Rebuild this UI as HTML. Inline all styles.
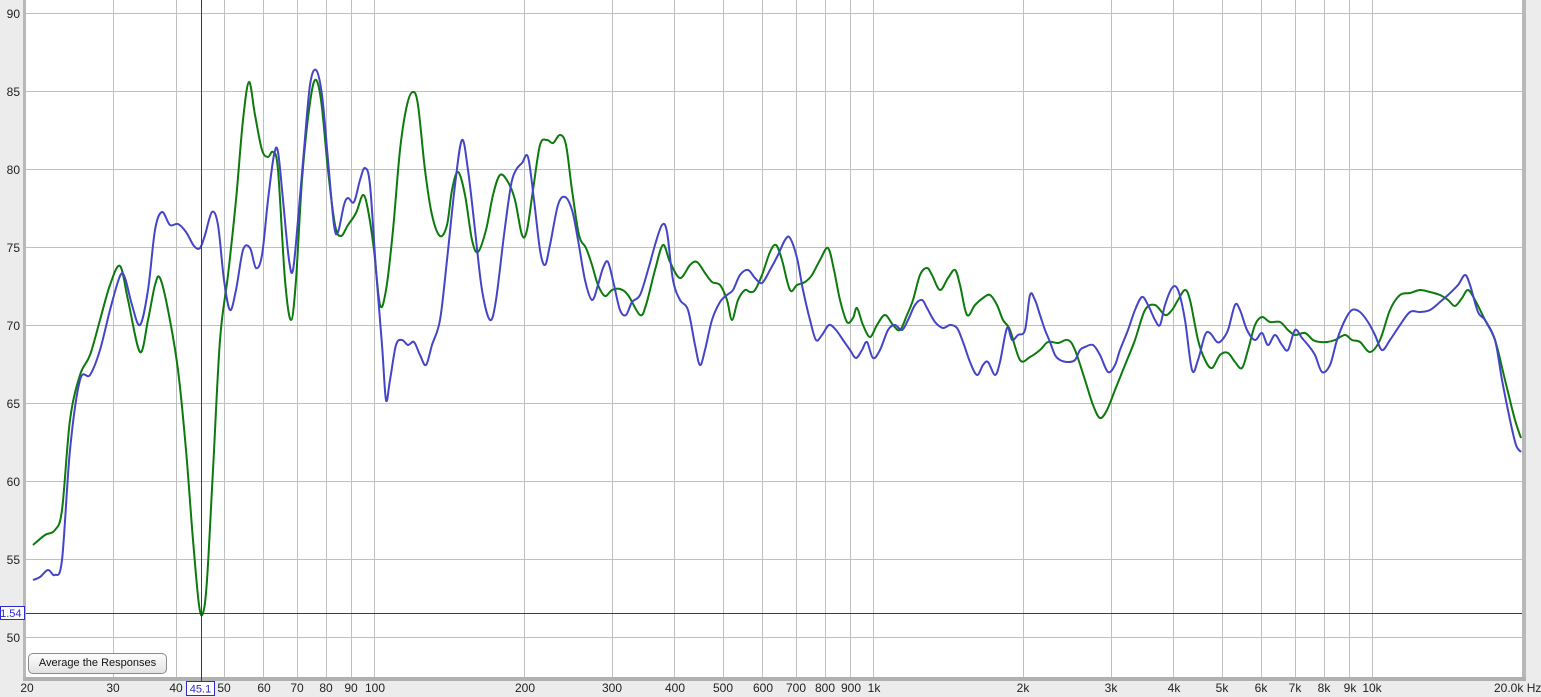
<!DOCTYPE html>
<html><head><meta charset="utf-8"><style>
html,body{margin:0;padding:0;background:#ececec;width:1541px;height:697px;overflow:hidden;font-family:"Liberation Sans",sans-serif}
svg{display:block}
.btn{position:absolute;left:28px;top:653px;width:139px;height:21px;border:1px solid #8a8a8a;border-radius:5px;background:linear-gradient(#fdfdfd,#e2e2e2);box-sizing:border-box;font-size:11px;line-height:19px;text-align:center;color:#111}
</style></head><body>
<svg width="1541" height="697" xmlns="http://www.w3.org/2000/svg" font-family="Liberation Sans, sans-serif" font-size="12" fill="#222">
<rect x="0" y="0" width="1541" height="697" fill="#ececec"/>
<rect x="23" y="0" width="4" height="681" fill="#b8b8b8"/>
<rect x="1522" y="0" width="4" height="681" fill="#b8b8b8"/>
<rect x="23" y="677" width="1503" height="4" fill="#b0b0b0"/>
<rect x="26" y="0" width="1496" height="677" fill="#fff"/>
<g stroke="#c0c0c0" stroke-width="1">
<line x1="26" x2="1522" y1="13.5" y2="13.5"/><line x1="26" x2="1522" y1="91.5" y2="91.5"/><line x1="26" x2="1522" y1="169.5" y2="169.5"/><line x1="26" x2="1522" y1="247.5" y2="247.5"/><line x1="26" x2="1522" y1="325.5" y2="325.5"/><line x1="26" x2="1522" y1="403.5" y2="403.5"/><line x1="26" x2="1522" y1="481.5" y2="481.5"/><line x1="26" x2="1522" y1="559.5" y2="559.5"/><line x1="26" x2="1522" y1="637.5" y2="637.5"/>
<line x1="113.5" x2="113.5" y1="0" y2="677"/><line x1="176.5" x2="176.5" y1="0" y2="677"/><line x1="224.5" x2="224.5" y1="0" y2="677"/><line x1="263.5" x2="263.5" y1="0" y2="677"/><line x1="297.5" x2="297.5" y1="0" y2="677"/><line x1="326.5" x2="326.5" y1="0" y2="677"/><line x1="351.5" x2="351.5" y1="0" y2="677"/><line x1="374.5" x2="374.5" y1="0" y2="677"/><line x1="524.5" x2="524.5" y1="0" y2="677"/><line x1="612.5" x2="612.5" y1="0" y2="677"/><line x1="674.5" x2="674.5" y1="0" y2="677"/><line x1="723.5" x2="723.5" y1="0" y2="677"/><line x1="762.5" x2="762.5" y1="0" y2="677"/><line x1="796.5" x2="796.5" y1="0" y2="677"/><line x1="825.5" x2="825.5" y1="0" y2="677"/><line x1="850.5" x2="850.5" y1="0" y2="677"/><line x1="873.5" x2="873.5" y1="0" y2="677"/><line x1="1023.5" x2="1023.5" y1="0" y2="677"/><line x1="1111.5" x2="1111.5" y1="0" y2="677"/><line x1="1173.5" x2="1173.5" y1="0" y2="677"/><line x1="1222.5" x2="1222.5" y1="0" y2="677"/><line x1="1261.5" x2="1261.5" y1="0" y2="677"/><line x1="1295.5" x2="1295.5" y1="0" y2="677"/><line x1="1324.5" x2="1324.5" y1="0" y2="677"/><line x1="1349.5" x2="1349.5" y1="0" y2="677"/><line x1="1372.5" x2="1372.5" y1="0" y2="677"/>
</g>
<g text-anchor="end">
<text x="20" y="18">90</text><text x="20" y="96">85</text><text x="20" y="174">80</text><text x="20" y="252">75</text><text x="20" y="330">70</text><text x="20" y="408">65</text><text x="20" y="486">60</text><text x="20" y="564">55</text><text x="20" y="642">50</text>
</g>
<g text-anchor="middle">
<text x="27" y="692">20</text><text x="113" y="692">30</text><text x="176" y="692">40</text><text x="224" y="692">50</text><text x="264" y="692">60</text><text x="297" y="692">70</text><text x="326" y="692">80</text><text x="351" y="692">90</text><text x="375" y="692">100</text><text x="525" y="692">200</text><text x="612" y="692">300</text><text x="675" y="692">400</text><text x="723" y="692">500</text><text x="763" y="692">600</text><text x="796" y="692">700</text><text x="825" y="692">800</text><text x="851" y="692">900</text><text x="874" y="692">1k</text><text x="1023" y="692">2k</text><text x="1111" y="692">3k</text><text x="1174" y="692">4k</text><text x="1222" y="692">5k</text><text x="1261" y="692">6k</text><text x="1295" y="692">7k</text><text x="1324" y="692">8k</text><text x="1350" y="692">9k</text><text x="1372" y="692">10k</text>
</g>
<text x="1494" y="692">20.0k Hz</text>
<polyline class="c" fill="none" stroke="#0c7a0c" stroke-width="2" stroke-linejoin="round" points="33,545 45,535 55,530 62,510 70,420 80,375 90,355 100,320 110,285 120,266 128,300 140,352 148,320 155,285 160,278 168,310 178,370 186,450 193,540 199,605 203,613 207,580 213,470 220,340 228,275 236,200 243,120 249,82 255,115 262,150 268,157 273,152 278,170 285,280 291,320 296,280 302,180 309,110 315,80 321,100 328,170 335,225 341,236 348,225 356,213 363,195 368,210 374,250 380,305 386,290 393,230 400,150 407,105 413,92 418,105 425,170 432,215 440,236 447,225 452,190 458,172 465,195 472,240 478,252 486,230 493,195 500,175 508,182 515,200 522,235 527,230 533,190 540,145 547,140 553,143 560,135 566,145 572,190 579,235 586,248 592,265 598,285 605,296 612,290 620,289 628,295 640,315 646,305 655,270 663,245 670,262 680,278 690,265 697,262 705,273 712,282 720,285 727,300 732,320 738,300 745,290 750,292 755,290 762,275 770,252 776,245 782,260 790,290 797,285 805,282 812,275 820,260 828,248 834,270 840,300 847,322 853,318 857,308 863,325 870,337 877,325 885,315 893,325 900,330 907,315 913,300 920,275 927,268 932,275 940,290 948,278 955,270 960,285 967,315 975,305 983,298 990,295 997,305 1003,320 1010,330 1020,360 1030,357 1040,350 1048,342 1058,343 1068,340 1075,350 1085,380 1093,405 1100,418 1107,410 1115,390 1125,365 1135,340 1145,310 1155,305 1165,315 1172,310 1178,300 1185,290 1190,300 1198,340 1205,360 1212,368 1220,355 1228,353 1235,362 1242,368 1248,350 1255,325 1262,317 1270,322 1280,322 1288,330 1295,335 1305,333 1313,340 1320,342 1327,342 1335,340 1345,335 1352,340 1360,342 1370,352 1380,340 1390,310 1400,295 1410,293 1420,290 1430,292 1440,295 1448,300 1455,306 1462,298 1468,290 1475,300 1485,320 1495,340 1505,380 1515,420 1521,438"/>
<polyline class="c" fill="none" stroke="#4444c8" stroke-width="2" stroke-linejoin="round" points="33,580 40,577 48,570 55,575 62,560 70,450 80,380 90,375 100,350 110,310 120,276 125,278 132,305 140,325 148,290 155,230 162,212 170,225 178,224 186,232 194,246 200,248 205,235 212,212 218,225 224,280 230,310 236,290 243,250 250,248 256,268 262,255 268,200 274,155 278,152 283,200 289,260 293,270 298,220 304,150 310,85 316,70 322,95 328,160 334,225 338,232 344,205 348,198 354,202 360,180 365,168 370,185 376,270 382,345 386,400 390,380 396,345 402,340 408,345 414,342 420,355 426,365 432,345 440,320 447,260 455,185 462,140 468,170 475,230 482,290 490,320 496,300 504,235 511,185 516,170 522,163 528,157 534,200 540,250 545,265 550,245 558,205 565,197 572,210 578,240 585,280 592,300 598,285 603,268 608,262 614,285 620,310 626,315 632,302 640,295 648,270 655,245 662,225 667,232 673,280 680,300 688,310 695,345 700,365 705,350 712,320 720,302 727,295 733,290 740,275 748,270 755,278 762,283 770,270 778,255 785,240 790,238 797,258 803,290 810,320 816,340 822,335 829,325 836,330 843,340 850,350 856,358 862,350 867,342 873,358 880,350 888,330 895,325 902,330 908,320 915,305 922,300 927,308 935,322 943,328 950,325 957,328 963,342 970,362 977,375 983,365 988,362 995,375 1000,362 1007,328 1012,340 1018,335 1025,330 1030,295 1035,300 1040,315 1045,330 1050,342 1055,355 1060,360 1068,362 1075,360 1080,350 1085,347 1093,345 1100,355 1108,372 1115,365 1120,350 1128,330 1135,310 1142,297 1148,305 1155,320 1160,325 1165,305 1172,288 1178,290 1185,320 1192,370 1198,360 1205,335 1210,333 1217,342 1222,340 1228,330 1235,305 1240,310 1247,330 1255,340 1262,333 1268,345 1275,335 1282,345 1288,350 1295,330 1302,338 1308,345 1315,355 1322,372 1330,365 1337,340 1345,320 1352,310 1360,312 1368,322 1375,335 1382,350 1390,340 1400,325 1410,312 1420,312 1430,310 1440,302 1448,295 1458,285 1465,275 1470,285 1478,312 1485,320 1495,340 1502,380 1510,420 1516,445 1521,452"/>
<line x1="26" x2="1522" y1="613.5" y2="613.5" stroke="#2a2ad0" stroke-width="1"/>
<line x1="201.5" x2="201.5" y1="0" y2="681" stroke="#2a2ad0" stroke-width="1"/>
<rect x="0.5" y="606.5" width="24" height="13" fill="#fff" stroke="#2a2ad0"/>
<text x="-6" y="617" fill="#2a2ad0" font-size="11">51.54</text>
<rect x="186.5" y="681.5" width="28" height="14" fill="#fff" stroke="#2a2ad0"/>
<text x="200.5" y="692.5" fill="#2a2ad0" font-size="11" text-anchor="middle">45.1</text>
</svg>
<div class="btn">Average the Responses</div>
<script>
document.querySelectorAll('polyline.c').forEach(function(pl){
  var p=pl.getAttribute('points').trim().split(/\s+/).map(function(s){return s.split(',').map(Number);});
  var d='M'+p[0][0]+','+p[0][1];
  for(var i=0;i<p.length-1;i++){
    var p0=p[i-1]||p[i],p1=p[i],p2=p[i+1],p3=p[i+2]||p2;
    var c1x=p1[0]+(p2[0]-p0[0])/6,c1y=p1[1]+(p2[1]-p0[1])/6;
    var c2x=p2[0]-(p3[0]-p1[0])/6,c2y=p2[1]-(p3[1]-p1[1])/6;
    d+=' C'+c1x.toFixed(1)+','+c1y.toFixed(1)+' '+c2x.toFixed(1)+','+c2y.toFixed(1)+' '+p2[0]+','+p2[1];
  }
  var path=document.createElementNS('http://www.w3.org/2000/svg','path');
  path.setAttribute('d',d);path.setAttribute('fill','none');
  path.setAttribute('stroke',pl.getAttribute('stroke'));path.setAttribute('stroke-width','2');
  pl.parentNode.replaceChild(path,pl);
});
</script>
</body></html>
